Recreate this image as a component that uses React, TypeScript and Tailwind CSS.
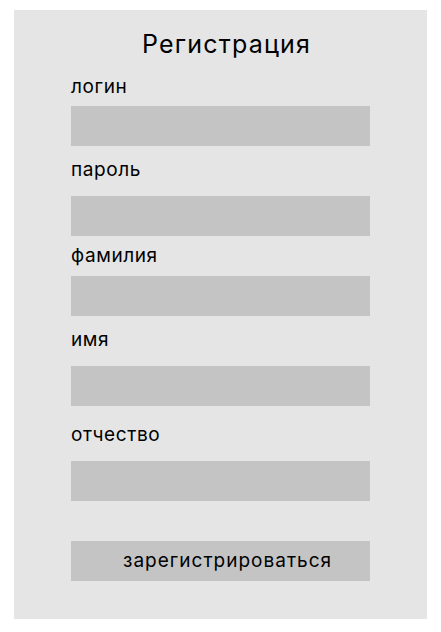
import React from 'react';

const fields = [
  { label: 'логин', top: 'mt-[16px]', gap: 'mb-[8px]' },
  { label: 'пароль', top: 'mt-[13px]', gap: 'mb-[15px]' },
  { label: 'фамилия', top: 'mt-[9px]', gap: 'mb-[9px]' },
  { label: 'имя', top: 'mt-[13px]', gap: 'mb-[15px]' },
  { label: 'отчество', top: 'mt-[18px]', gap: 'mb-[15px]' },
];

const App: React.FC = () => {
  return (
    <div className="min-h-screen bg-white pt-[10px] pl-[14px]" style={{ fontFamily: 'Inter, "Noto Sans", sans-serif' }}>
      <form className="w-[413px] h-[609px] bg-[#e5e5e5] pt-[18px] text-black">
        <h1 className="pl-[12px] text-center text-[25px] leading-[32px] font-normal tracking-[1.2px]">Регистрация</h1>
        <div className="pl-[57px]">
          {fields.map((field) => (
            <div key={field.label}>
              <label className={`block text-[19px] leading-[22px] tracking-[0.6px] ${field.top} ${field.gap}`}>
                {field.label}
              </label>
              <div className="w-[299px] h-[40px] bg-[#c4c4c4]" />
            </div>
          ))}
          <button
            type="button"
            className="mt-[40px] w-[299px] h-[40px] bg-[#c4c4c4] pl-[52px] text-left text-[19px] leading-[22px] tracking-[1px]"
          >
            зарегистрироваться
          </button>
        </div>
      </form>
    </div>
  );
};

export default App;
